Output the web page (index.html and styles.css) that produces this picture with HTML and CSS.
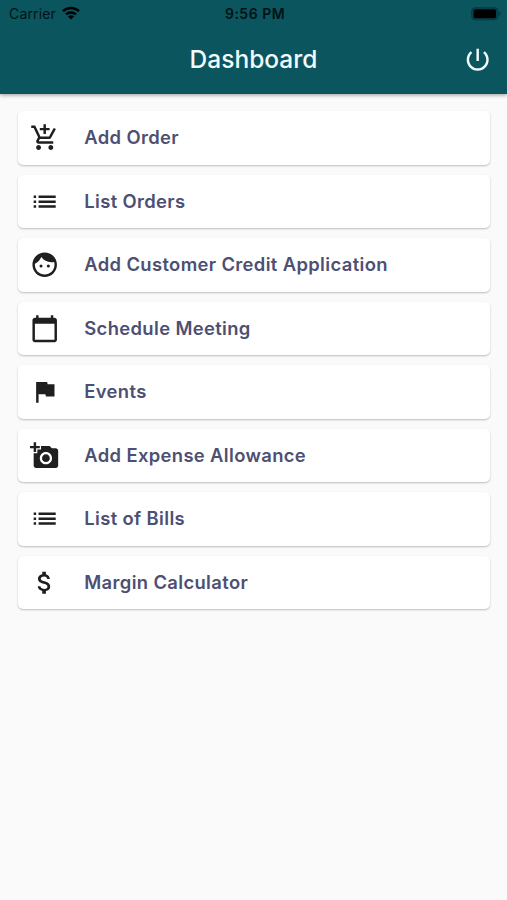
FILE: index.html
```html
<!DOCTYPE html>
<html lang="en">
<head>
<meta charset="utf-8">
<title>Dashboard</title>
<link rel="stylesheet" href="styles.css">
</head>
<body>
<header class="header">
  <div class="status">
    <div class="carrier"><span class="carrier-name">Carrier</span>
      <svg class="wifi" viewBox="0 0 18 14"><g fill="none" stroke="#000" stroke-width="2.5"><path d="M1 5.2a11.4 11.4 0 0 1 16 0"/><path d="M4 8.4a7.2 7.2 0 0 1 10 0"/></g><path d="M9 13.6 5.9 10.5a4.4 4.4 0 0 1 6.2 0z"/></svg>
    </div>
    <span class="time">9:56 PM</span>
    <svg class="battery" viewBox="0 0 30 14"><rect x=".6" y=".6" width="26.4" height="12.2" rx="3.6" fill="#07424c" stroke="#073b44"/><rect x="2.6" y="2.2" width="22.4" height="9" rx="1.6" fill="#000"/><path d="M28.2 4.5c2 .8 2 3.7 0 4.5z" fill="#073b44"/></svg>
  </div>
  <div class="bar">
    <h1 class="title">Dashboard</h1>
    <svg class="power" viewBox="0 0 24 24"><path d="M13 3h-2v10h2V3zm4.830 2.170-1.420 1.420C17.990 7.860 19 9.810 19 12c0 3.870-3.130 7-7 7s-7-3.130-7-7c0-2.190 1.010-4.140 2.580-5.420L6.170 5.170C4.230 6.820 3 9.260 3 12c0 4.970 4.030 9 9 9s9-4.030 9-9c0-2.740-1.230-5.180-3.170-6.830z"/></svg>
  </div>
</header>
<main class="list">
  <div class="card"><svg class="icon" viewBox="0 0 24 24"><path d="M11 9h2V6h3V4h-3V1h-2v3H8v2h3v3zm-4 9c-1.100 0-1.990.9-1.990 2S5.900 22 7 22s2-.9 2-2-.9-2-2-2zm10 0c-1.100 0-1.990.9-1.990 2s.89 2 1.990 2 2-.9 2-2-.9-2-2-2zm-9.830-3.250.03-.12.900-1.630h7.450c.75 0 1.410-.41 1.750-1.030l3.860-7.010L19.420 4h-.01l-1.100 2-2.760 5H8.530l-.13-.27L6.160 6l-.95-2-.94-2H1v2h2l3.600 7.590-1.350 2.450c-.16.28-.25.61-.25.960 0 1.100.9 2 2 2h12v-2H7.420c-.13 0-.25-.11-.25-.25z"/></svg><span class="label">Add Order</span></div>
  <div class="card"><svg class="icon" viewBox="0 0 24 24"><path d="M3 13h2v-2H3v2zm0 4h2v-2H3v2zm0-8h2V7H3v2zm4 4h14v-2H7v2zm0 4h14v-2H7v2zM7 7v2h14V7H7z"/></svg><span class="label">List Orders</span></div>
  <div class="card"><svg class="icon" viewBox="0 0 24 24"><path d="M9 11.750a1.250 1.250 0 1 0 0 2.500 1.250 1.250 0 0 0 0-2.500zm6 0a1.250 1.250 0 1 0 0 2.500 1.250 1.250 0 0 0 0-2.500zM12 2C6.480 2 2 6.480 2 12s4.480 10 10 10 10-4.480 10-10S17.520 2 12 2zm0 18c-4.410 0-8-3.590-8-8 0-.29.02-.58.05-.86 2.360-1.050 4.230-2.980 5.210-5.370C11.070 8.330 14.050 10 17.420 10c.78 0 1.530-.09 2.250-.26.21.71.33 1.470.33 2.260 0 4.410-3.590 8-8 8z"/></svg><span class="label">Add Customer Credit Application</span></div>
  <div class="card"><svg class="icon" viewBox="0 0 24 24"><path d="M20 3h-1V1h-2v2H7V1H5v2H4c-1.100 0-2 .9-2 2v16c0 1.100.9 2 2 2h16c1.100 0 2-.9 2-2V5c0-1.100-.9-2-2-2zm0 18H4V8h16v13z"/></svg><span class="label">Schedule Meeting</span></div>
  <div class="card"><svg class="icon" viewBox="0 0 24 24"><path d="M14.400 6 14 4H5v17h2v-7h5.600l.4 2h7V6z"/></svg><span class="label">Events</span></div>
  <div class="card"><svg class="icon" viewBox="0 0 24 24"><path d="M3 4V1h2v3h3v2H5v3H3V6H0V4h3zm3 6V7h3V4h7l1.830 2H21c1.100 0 2 .9 2 2v12c0 1.100-.9 2-2 2H5c-1.100 0-2-.9-2-2V10h3zm7 9c2.760 0 5-2.240 5-5s-2.240-5-5-5-5 2.240-5 5 2.240 5 5 5zm-3.200-5c0 1.770 1.430 3.200 3.200 3.200s3.200-1.430 3.200-3.200-1.430-3.200-3.200-3.200-3.200 1.430-3.200 3.200z"/></svg><span class="label">Add Expense Allowance</span></div>
  <div class="card"><svg class="icon" viewBox="0 0 24 24"><path d="M3 13h2v-2H3v2zm0 4h2v-2H3v2zm0-8h2V7H3v2zm4 4h14v-2H7v2zm0 4h14v-2H7v2zM7 7v2h14V7H7z"/></svg><span class="label">List of Bills</span></div>
  <div class="card"><svg class="icon" viewBox="0 0 24 24"><path d="M11.800 10.900c-2.270-.59-3-1.200-3-2.150 0-1.090 1.010-1.850 2.700-1.850 1.780 0 2.440.85 2.500 2.100h2.210c-.07-1.720-1.120-3.300-3.210-3.810V3h-3v2.160c-1.940.42-3.500 1.680-3.500 3.610 0 2.310 1.910 3.460 4.700 4.130 2.500.6 3 1.480 3 2.410 0 .69-.49 1.790-2.700 1.790-2.060 0-2.870-.92-2.980-2.100h-2.200c.12 2.190 1.760 3.420 3.680 3.830V21h3v-2.150c1.950-.37 3.500-1.500 3.500-3.550 0-2.840-2.430-3.810-4.700-4.400z"/></svg><span class="label">Margin Calculator</span></div>
</main>
</body>
</html>
```

FILE: styles.css
```css
* { box-sizing: border-box; }
body {
  margin: 0;
  min-height: 100vh;
  background: #fafafa;
  font-family: Inter, "Liberation Sans", sans-serif;
}
.header {
  height: 94px;
  background: #0b555f;
  box-shadow: 0 1px 4px rgba(0, 0, 0, .4);
}
.status {
  display: grid;
  grid-template-columns: 1fr auto 1fr;
  align-items: center;
  height: 26px;
  padding: 1px 6px 0 9px;
  color: #001216;
  font-size: 14px;
}
.carrier { display: flex; align-items: center; gap: 6px; }
.carrier-name { letter-spacing: .15px; }
.wifi { width: 18px; height: 14px; margin-top: -2px; }
.time { font-weight: 600; font-size: 14px; letter-spacing: .5px; }
.battery { width: 30px; height: 14px; justify-self: end; }
.bar {
  display: grid;
  grid-template-columns: 1fr auto 1fr;
  align-items: center;
  height: 67px;
  padding: 0 15px;
}
.title {
  grid-column: 2;
  margin: 0;
  padding-bottom: 1px;
  color: #f2fbfc;
  font-size: 24.5px;
  font-weight: 500;
  line-height: 29px;
}
.power { width: 29.4px; height: 29.4px; justify-self: end; fill: #f2fbfc; }
.list {
  display: flex;
  flex-direction: column;
  gap: 10px;
  padding: 17px 17px 0 18px;
}
.card {
  display: flex;
  align-items: center;
  gap: 24.5px;
  height: 53.5px;
  padding-left: 12.4px;
  background: #fff;
  border-radius: 5px;
  box-shadow: 0 1px 2px rgba(0, 0, 0, .25);
}
.icon { flex: none; width: 29.4px; height: 29.4px; fill: #1f1f1f; }
.label {
  padding-bottom: 1.4px;
  color: #4d4f73;
  font-size: 18.4px;
  font-weight: 600;
  letter-spacing: .36px;
  line-height: 24px;
  white-space: nowrap;
}
```
